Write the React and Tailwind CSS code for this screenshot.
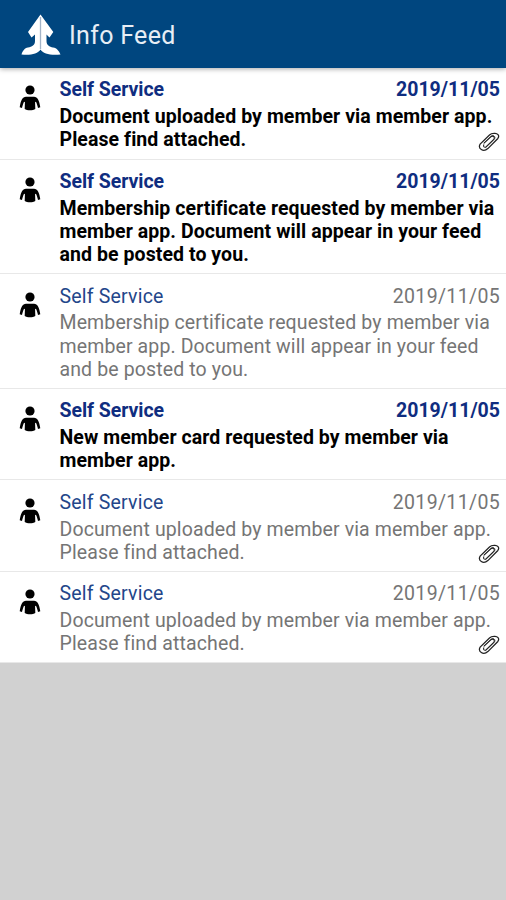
import React from 'react';

const items = [
  {
    id: 1,
    lines: ['Document uploaded by member via member app.', 'Please find attached.'],
    unread: true,
    attachment: true
  },
  {
    id: 2,
    lines: [
      'Membership certificate requested by member via',
      'member app. Document will appear in your feed',
      'and be posted to you.'
    ],
    unread: true
  },
  {
    id: 3,
    lines: [
      'Membership certificate requested by member via',
      'member app. Document will appear in your feed',
      'and be posted to you.'
    ]
  },
  {
    id: 4,
    lines: ['New member card requested by member via', 'member app.'],
    unread: true
  },
  {
    id: 5,
    lines: ['Document uploaded by member via member app.', 'Please find attached.'],
    attachment: true
  },
  {
    id: 6,
    lines: ['Document uploaded by member via member app.', 'Please find attached.'],
    attachment: true
  }
];

const Logo = () => (
  <svg className="w-10 h-[42px] mt-[2px] shrink-0" viewBox="0 0 40 42">
    <path
      d="M19.500 0.500 L32.300 18 L28.500 23.500 L25.500 20.500 V27 C25.500 31 28.500 33 32 33.500 C36 34 38 37 39.500 40.500 C30 41.500 22 40 19.500 35.500 C17 40 9 41.500 0.500 40.500 C1.500 37 3.500 34 7 33.500 C11 33 14 31 14 27 V20.500 L10.500 23.500 L7 18 Z"
      fill="#fff"
    />
    <path d="M19.500 3 V35" stroke="#a3b4c8" strokeWidth="1.300" />
  </svg>
);

const Person = () => (
  <svg className="w-[22px] h-[26px] shrink-0" viewBox="0 0 22 26">
    <circle cx="11" cy="5" r="4.600" />
    <path d="M7 11.700 H15 C18.500 11.700 20.300 15.500 21.300 22.300 L19 23 C18.500 20.500 17.800 18.500 16.300 16.500 V24 C14 25.700 8 25.700 5.700 24 V16.500 C4.200 18.500 3.500 20.500 3 23 L0.700 22.300 C1.700 15.500 3.500 11.700 7 11.700 Z" />
    <path d="M5.300 17 L4.500 24 M16.700 17 L17.500 24" stroke="#fff" strokeWidth="1" />
  </svg>
);

const Paperclip = () => (
  <svg
    className="absolute right-[6px] bottom-[7px] w-[22px] h-[20px]"
    viewBox="0 0 23 21"
    fill="none"
    strokeLinecap="round"
  >
    <path
      d="M6.500 11.500 L13.300 5.200 C15.700 3 18.400 5.600 16.200 7.900 L8.600 15.300 C6.900 17 4.900 15.200 6.100 13.500"
      stroke="#222"
      strokeWidth="1.100"
    />
    <path
      d="M6.200 11.800 L14 4.300 C15.200 3.200 16.800 3.800 17.400 4.800 C18.100 6 17.500 7.200 16.500 8.200 L8.300 16"
      stroke="#222"
      strokeWidth="0.900"
    />
    <path
      d="M16.500 1.500 C20.500 0.800 23 3.800 20.800 6.800 L10.300 17.400 C5.500 21.700 -0.500 17.500 2.200 12.700 L12 3.200 C13.500 1.800 15 1.500 16.500 1.500"
      stroke="#222"
      strokeWidth="1.300"
    />
  </svg>
);

const FeedItem = ({ item }) => (
  <li
    className={`relative flex pl-[19px] pr-[6px] pt-[10.450px] pb-[7px] border-b border-[#e8e8e8] ${item.unread ? 'font-bold' : ''}`}
  >
    <div className="w-[40.500px] shrink-0 pt-[7px]">
      <Person />
    </div>
    <div className="flex-1 min-w-0">
      <div className={`flex justify-between mb-[3.900px] leading-[23px] ${item.unread ? 'text-[#0f2d80]' : 'text-[#23468a]'}`}>
        <span className={item.unread ? 'tracking-[-0.050px]' : 'tracking-[0.200px]'}>Self Service</span>
        <span className={item.unread ? 'tracking-[0px]' : 'tracking-[0.350px] text-[#757575]'}>2019/11/05</span>
      </div>
      <div
        className={`leading-[23.100px] whitespace-nowrap ${item.unread ? 'text-black tracking-[0.070px]' : 'text-[#757575] tracking-[0.120px]'}`}
      >
        {item.lines.map((line, index) => (
          <div key={index}>{line}</div>
        ))}
      </div>
    </div>
    {item.attachment && <Paperclip />}
  </li>
);

const App = () => {
  return (
    <div className="flex flex-col h-screen bg-[#d1d1d1] overflow-hidden font-['Roboto',sans-serif] text-[19.500px]">
      <header className="relative flex items-center h-[68px] shrink-0 pl-[21px] bg-[#00467f] text-[#e8eef5] shadow-[0_1px_5px_rgba(0,0,0,0.35)]">
        <Logo />
        <h1 className="ml-2 mt-[3px] text-[25px] tracking-[0.300px]">Info Feed</h1>
      </header>
      <ul className="bg-white">
        {items.map((item) => (
          <FeedItem key={item.id} item={item} />
        ))}
      </ul>
    </div>
  );
};

export default App;
